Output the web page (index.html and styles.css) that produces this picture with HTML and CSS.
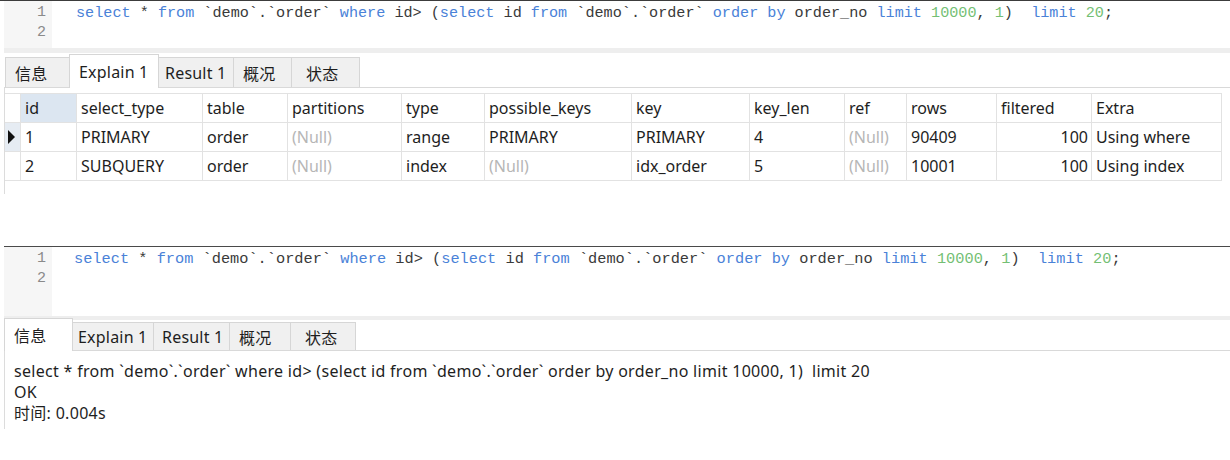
FILE: index.html
```html
<!DOCTYPE html>
<html lang="zh">
<head>
<meta charset="utf-8">
<title>Explain</title>
<link rel="stylesheet" href="styles.css">
</head>
<body>
<section class="panel panel-first">
  <div class="editor editor-short">
    <div class="gutter"><div>1</div><div>2</div></div>
    <pre class="code code-first"><span class="kw">select</span> * <span class="kw">from</span> `demo`.`order` <span class="kw">where</span> id&gt; (<span class="kw">select</span> id <span class="kw">from</span> `demo`.`order` <span class="kw">order by</span> order_no <span class="kw">limit</span> <span class="num">10000</span>, <span class="num">1</span>)  <span class="kw">limit</span> <span class="num">20</span>;
</pre>
  </div>
  <div class="sep"></div>
  <div class="tabbar tabbar-first">
    <div class="tab tab-info1">信息</div>
    <div class="tab active tab-explain1">Explain 1</div>
    <div class="tab tab-result1">Result 1</div>
    <div class="tab tab-overview1">概况</div>
    <div class="tab tab-status1">状态</div>
  </div>
  <div class="result">
    <div class="grid">
      <div class="c ind"></div>
      <div class="c hsel">id</div>
      <div class="c">select_type</div>
      <div class="c">table</div>
      <div class="c">partitions</div>
      <div class="c">type</div>
      <div class="c">possible_keys</div>
      <div class="c">key</div>
      <div class="c">key_len</div>
      <div class="c">ref</div>
      <div class="c">rows</div>
      <div class="c">filtered</div>
      <div class="c">Extra</div>

      <div class="c ind cur"><span class="arrow"></span></div>
      <div class="c">1</div>
      <div class="c">PRIMARY</div>
      <div class="c">order</div>
      <div class="c null">(Null)</div>
      <div class="c">range</div>
      <div class="c">PRIMARY</div>
      <div class="c">PRIMARY</div>
      <div class="c">4</div>
      <div class="c null">(Null)</div>
      <div class="c">90409</div>
      <div class="c right">100</div>
      <div class="c">Using where</div>

      <div class="c ind"></div>
      <div class="c">2</div>
      <div class="c">SUBQUERY</div>
      <div class="c">order</div>
      <div class="c null">(Null)</div>
      <div class="c">index</div>
      <div class="c null">(Null)</div>
      <div class="c">idx_order</div>
      <div class="c">5</div>
      <div class="c null">(Null)</div>
      <div class="c">10001</div>
      <div class="c right">100</div>
      <div class="c">Using index</div>
    </div>
  </div>
</section>

<section class="panel panel-second">
  <div class="editor editor-tall">
    <div class="gutter"><div>1</div><div>2</div></div>
    <pre class="code code-second"><span class="kw">select</span> * <span class="kw">from</span> `demo`.`order` <span class="kw">where</span> id&gt; (<span class="kw">select</span> id <span class="kw">from</span> `demo`.`order` <span class="kw">order by</span> order_no <span class="kw">limit</span> <span class="num">10000</span>, <span class="num">1</span>)  <span class="kw">limit</span> <span class="num">20</span>;
</pre>
  </div>
  <div class="sep sep-second"></div>
  <div class="tabbar tabbar-second">
    <div class="tab active tab-info2">信息</div>
    <div class="tab tab-explain2">Explain 1</div>
    <div class="tab tab-result2">Result 1</div>
    <div class="tab tab-overview2">概况</div>
    <div class="tab tab-status2">状态</div>
  </div>
  <div class="messages">
    <div class="msg">select * from `demo`.`order` where id&gt; (select id from `demo`.`order` order by order_no limit 10000, 1)  limit 20</div>
    <div class="msg">OK</div>
    <div class="msg">时间: 0.004s</div>
  </div>
</section>
</body>
</html>
```

FILE: styles.css
```css
* { box-sizing: border-box; }

body {
  margin: 0;
  background: #ffffff;
  color: #1e1e1e;
  font-family: "Noto Sans", "Noto Sans CJK SC", sans-serif;
  font-size: 16px;
  width: 1230px;
  height: 460px;
  overflow: hidden;
}

.panel-first {
  border-top: 1px solid #3c3c3c;
  padding-left: 4px;
}

.panel-second {
  margin-top: 52px;
  margin-left: 4px;
  border-top: 1px solid #4a4a4a;
}

.editor {
  display: flex;
  background: #ffffff;
}
.editor-short { height: 47px; }
.editor-tall { height: 69px; }

.gutter {
  width: 48px;
  background: #f6f6f6;
  color: #8a8a8a;
  text-align: right;
  padding: 2px 6px 0 0;
  font-family: "Liberation Mono", "DejaVu Sans Mono", monospace;
  font-size: 15px;
  line-height: 20px;
}

.code {
  margin: 0;
  padding-top: 2px;
  font-family: "Liberation Mono", "DejaVu Sans Mono", monospace;
  line-height: 20px;
  color: #3a3a3a;
  white-space: pre;
}
.code-first { padding-left: 24px; font-size: 15.17px; }
.code-second { padding-left: 22px; font-size: 15.3px; }

.kw { color: #4a82d8; }
.num { color: #74bf74; }

.sep {
  height: 5px;
  background: #eeeeee;
}
.sep-second { height: 4px; }

.tabbar {
  display: flex;
  align-items: flex-end;
  border-bottom: 1px solid #d9d9d9;
  background: #ffffff;
}
.tabbar-first { height: 35px; padding-left: 1px; }
.tabbar-second { height: 31px; }

.tab {
  height: 30px;
  background: #f0f0f0;
  border: 1px solid #d6d6d6;
  border-bottom: none;
  margin-right: -1px;
  display: flex;
  align-items: center;
  padding-left: 9px;
  font-size: 16px;
  letter-spacing: 0.2px;
  color: #1e1e1e;
  margin-bottom: 0;
}
.tab.active {
  background: #ffffff;
  height: 33px;
  margin-bottom: -1px;
  position: relative;
  z-index: 1;
}
.tabbar-first .tab.active { height: 34px; }
.tabbar-second .tab { height: 28px; }
.tabbar-second .tab.active { height: 33px; }

.tab-info1 { width: 65px; }
.tab-explain1 { width: 90px; }
.tab-result1 { width: 76px; padding-left: 6px; }
.tab-overview1 { width: 59px; }
.tab-status1 { width: 69px; padding-left: 14px; }

.tab-info2 { width: 69px; }
.tab-explain2 { width: 82px; padding-left: 5px; }
.tab-result2 { width: 77px; padding-left: 8px; }
.tab-overview2 { width: 62px; }
.tab-status2 { width: 66px; padding-left: 14px; }

.result {
  border-left: 1px solid #dcdcdc;
  padding-top: 5px;
  height: 106px;
}

.grid {
  display: grid;
  grid-template-columns: 16px 56px 126px 85px 114px 83px 147px 118px 95px 62px 90px 95px 130px;
  border-top: 1px solid #e2e2e2;
  width: max-content;
}

.c {
  height: 29px;
  border-right: 1px solid #e2e2e2;
  border-bottom: 1px solid #e2e2e2;
  padding-left: 4px;
  display: flex;
  align-items: center;
  white-space: nowrap;
  color: #1e1e1e;
  font-size: 16px;
}
.c.ind { padding-left: 0; }
.c.cur { background: #e6ecf3; padding-left: 3px; }
.c.hsel { background: #dce6f1; }
.c.null { color: #b6b6b6; }
.c.right { justify-content: flex-end; padding-right: 3px; }

.arrow {
  width: 0;
  height: 0;
  border-top: 7px solid transparent;
  border-bottom: 7px solid transparent;
  border-left: 7px solid #111111;
}

.messages {
  border-left: 1px solid #dcdcdc;
  padding: 10px 0 0 9px;
  height: 78px;
}
.msg {
  line-height: 21px;
  white-space: pre;
  font-size: 16px;
  letter-spacing: 0.3px;
  color: #1e1e1e;
}
```
